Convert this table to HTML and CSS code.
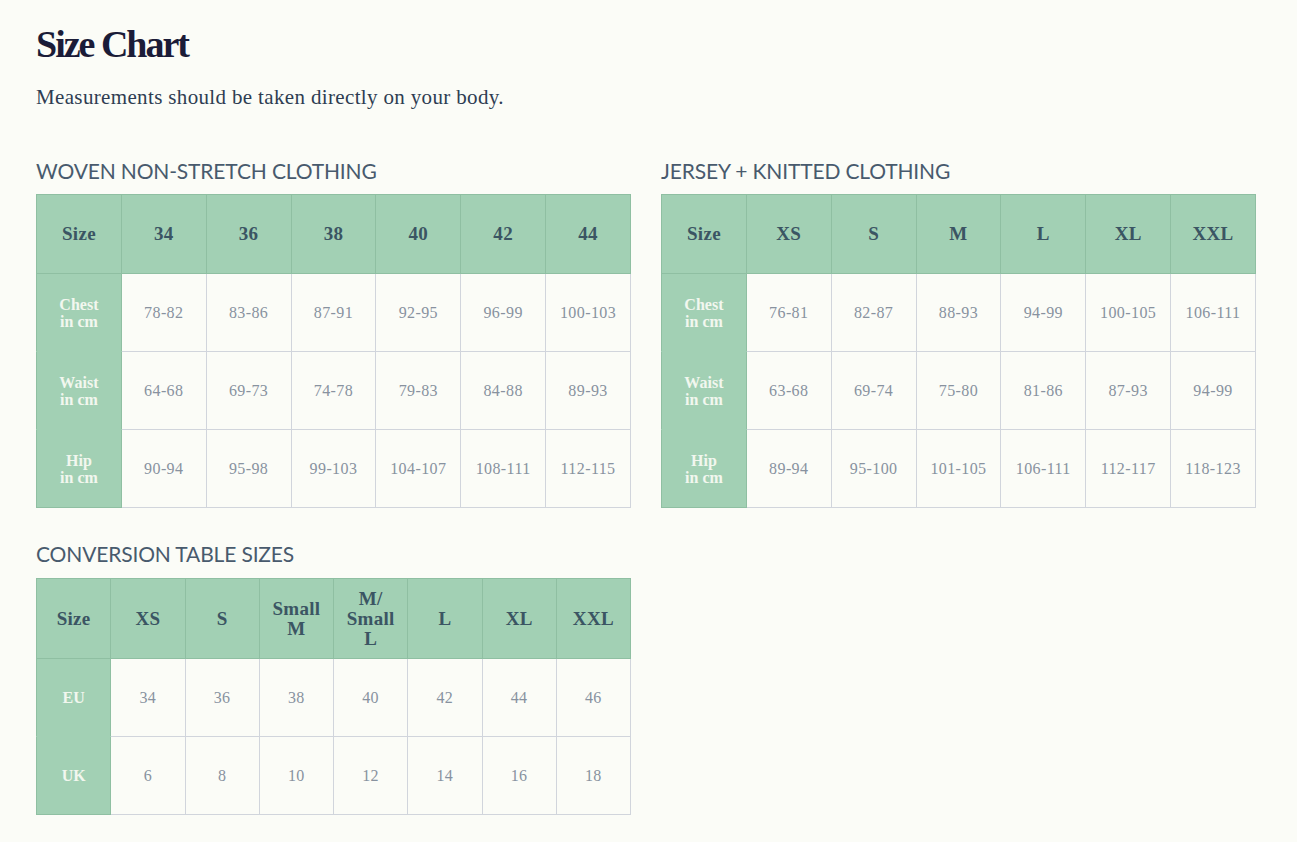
FILE: index.html
```html
<!DOCTYPE html>
<html lang="en">
<head>
<meta charset="utf-8">
<title>Size Chart</title>
<link rel="stylesheet" href="styles.css">
</head>
<body>
<main class="page">
  <h1 class="title">Size Chart</h1>
  <p class="intro">Measurements should be taken directly on your body.</p>

  <div class="charts">
    <section class="chart">
      <h2 class="chart-title">WOVEN NON-STRETCH CLOTHING</h2>
      <table class="size-table">
        <thead>
          <tr><th>Size</th><th>34</th><th>36</th><th>38</th><th>40</th><th>42</th><th>44</th></tr>
        </thead>
        <tbody>
          <tr><th>Chest<br>in cm</th><td>78-82</td><td>83-86</td><td>87-91</td><td>92-95</td><td>96-99</td><td>100-103</td></tr>
          <tr><th>Waist<br>in cm</th><td>64-68</td><td>69-73</td><td>74-78</td><td>79-83</td><td>84-88</td><td>89-93</td></tr>
          <tr><th>Hip<br>in cm</th><td>90-94</td><td>95-98</td><td>99-103</td><td>104-107</td><td>108-111</td><td>112-115</td></tr>
        </tbody>
      </table>
    </section>

    <section class="chart">
      <h2 class="chart-title">JERSEY + KNITTED CLOTHING</h2>
      <table class="size-table">
        <thead>
          <tr><th>Size</th><th>XS</th><th>S</th><th>M</th><th>L</th><th>XL</th><th>XXL</th></tr>
        </thead>
        <tbody>
          <tr><th>Chest<br>in cm</th><td>76-81</td><td>82-87</td><td>88-93</td><td>94-99</td><td>100-105</td><td>106-111</td></tr>
          <tr><th>Waist<br>in cm</th><td>63-68</td><td>69-74</td><td>75-80</td><td>81-86</td><td>87-93</td><td>94-99</td></tr>
          <tr><th>Hip<br>in cm</th><td>89-94</td><td>95-100</td><td>101-105</td><td>106-111</td><td>112-117</td><td>118-123</td></tr>
        </tbody>
      </table>
    </section>

    <section class="chart">
      <h2 class="chart-title conv">CONVERSION TABLE SIZES</h2>
      <table class="size-table conversion">
        <thead>
          <tr><th>Size</th><th>XS</th><th>S</th><th>Small<br>M</th><th>M/<br>Small<br>L</th><th>L</th><th>XL</th><th>XXL</th></tr>
        </thead>
        <tbody>
          <tr><th>EU</th><td>34</td><td>36</td><td>38</td><td>40</td><td>42</td><td>44</td><td>46</td></tr>
          <tr><th>UK</th><td>6</td><td>8</td><td>10</td><td>12</td><td>14</td><td>16</td><td>18</td></tr>
        </tbody>
      </table>
    </section>
  </div>
</main>
</body>
</html>
```

FILE: styles.css
```css
html, body {
  margin: 0;
  padding: 0;
  background: #fbfcf7;
}

.page {
  padding: 25px 36px 0;
}

.title {
  margin: 0;
  font-family: "Liberation Serif", "Times New Roman", serif;
  font-weight: bold;
  font-size: 38px;
  line-height: 38px;
  letter-spacing: -2px;
  color: #1b1c38;
}

.intro {
  margin: 22px 0 0;
  font-family: "Liberation Serif", "Times New Roman", serif;
  font-size: 21px;
  line-height: 24px;
  letter-spacing: 0.35px;
  color: #2e3d52;
}

.charts {
  margin-top: 50px;
  display: grid;
  grid-template-columns: 595px 595px;
  column-gap: 30px;
  row-gap: 34px;
  align-items: start;
}

.chart-title {
  margin: 0 0 11px;
  font-family: Lato, "Liberation Sans", sans-serif;
  font-weight: normal;
  font-size: 21px;
  line-height: 24px;
  letter-spacing: -0.15px;
  color: #485a6d;
}

.chart-title.conv {
  margin-bottom: 12px;
}

.size-table {
  width: 595px;
  table-layout: fixed;
  border-collapse: collapse;
  font-family: "Liberation Serif", "Times New Roman", serif;
  text-align: center;
}

.size-table thead th {
  height: 78px;
  padding: 0;
  background: #a2d0b4;
  border: 1px solid #8fbfa2;
  color: #3b5563;
  font-size: 19px;
  line-height: 20px;
  letter-spacing: 0.3px;
  font-weight: bold;
}

.size-table tbody tr {
  height: 78px;
}

.size-table tbody th {
  padding: 0;
  background: #a2d0b4;
  border: 1px solid #8fbfa2;
  border-bottom-color: #a2d0b4;
  color: #f2f7ef;
  font-size: 16px;
  line-height: 17px;
  font-weight: bold;
}

.size-table tbody tr:last-child th {
  border-bottom-color: #8fbfa2;
}

.size-table td {
  padding: 0;
  background: #fbfcf7;
  border: 1px solid #d1d5dc;
  color: #88929f;
  font-size: 16px;
  letter-spacing: 0.4px;
}

.conversion thead th {
  height: 79px;
}
```
